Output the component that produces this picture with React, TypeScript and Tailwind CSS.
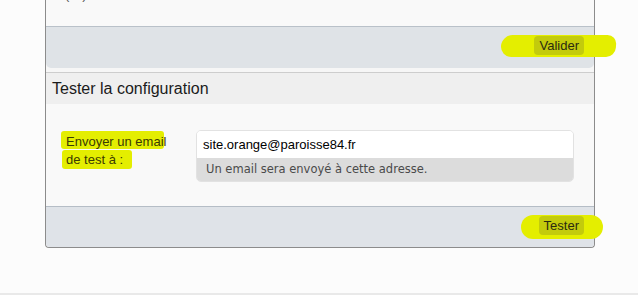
const font = { fontFamily: '"Liberation Sans", Arial, sans-serif' };

function Marker({ className }: { className: string }) {
  return <div className={`absolute bg-[#e4ee00] ${className}`} />;
}

function ActionButton({ label }: { label: string }) {
  return (
    <button className="relative z-10 h-[19px] rounded-[4px] bg-[#c3cb0c] px-[5px] text-[13px] leading-[19px] text-[#2a2a10]">
      {label}
    </button>
  );
}

export default function App() {
  return (
    <div className="min-h-screen bg-[#fcfcfc] text-[#222]" style={font}>
      <div className="ml-[45px] w-[550px] rounded-b-[4px] border-x border-b border-[#8c8c8c] bg-[#f6f6f6]">
        {/* previous panel, scrolled off the top */}
        <div className="h-[26px] overflow-hidden bg-[#f9f9f9] pl-[19px]">
          <p className="-mt-[14px] text-[13px] leading-[18px] text-[#555]">(…)</p>
        </div>
        <div className="relative flex h-[42px] items-center justify-end rounded-b-[5px] border-t border-[#b9c1c9] bg-[#dfe3e7] pr-[10px] pb-[4px]">
          <Marker className="left-[455px] top-[8px] h-[22px] w-[115px] rounded-l-[12px] rounded-r-[10px] skew-x-[-4deg]" />
          <ActionButton label="Valider" />
        </div>

        {/* test panel */}
        <div className="mt-[4px] border-t border-[#cdcdcd]">
          <div className="flex h-[31px] items-center bg-[#efefef] pl-[6px] text-[16px] text-[#1b1b1b]">
            Tester la configuration
          </div>
          <div className="flex h-[102px] items-start bg-[#f9f9f9] pt-[26px]">
            <div className="relative w-[150px] pl-[20px] text-[13px] leading-[18px] text-[#3b3b00]">
              <Marker className="left-[15px] top-[1px] h-[18px] w-[103px] rounded-[3px]" />
              <Marker className="left-[16px] top-[20px] h-[19px] w-[70px] rounded-[3px]" />
              <div className="relative z-10 pt-[3px]">
                Envoyer un email
                <br />
                de test à :
              </div>
            </div>
            <div className="w-[378px] overflow-hidden rounded-[5px] border border-[#e2e2e2]">
              <div className="flex h-[27px] items-center bg-white pl-[6px] text-[13px] text-black">
                site.orange@paroisse84.fr
              </div>
              <div
                className="flex h-[23px] items-center bg-[#dcdcdc] pl-[9px] text-[#4a4a4a]"
                style={{ fontFamily: '"DejaVu Sans", Verdana, sans-serif', fontSize: '11.5px' }}
              >
                Un email sera envoyé à cette adresse.
              </div>
            </div>
          </div>
          <div className="relative flex h-[41px] items-center justify-end rounded-b-[4px] border-t border-[#b5bdc6] bg-[#dfe3e8] pr-[10px] pb-[4px]">
            <Marker className="left-[475px] top-[8px] h-[24px] w-[82px] rounded-[12px]" />
            <ActionButton label="Tester" />
          </div>
        </div>
      </div>
      <div className="mt-[45px] h-[2px] bg-[#e9e9e9]" />
    </div>
  );
}
